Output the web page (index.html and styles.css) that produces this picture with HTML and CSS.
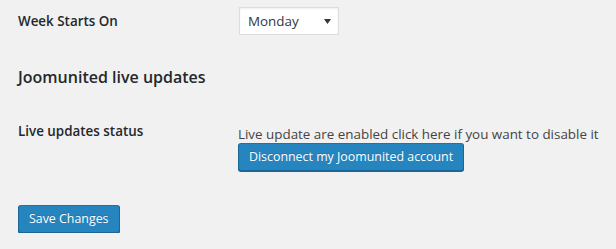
FILE: index.html
```html
<!DOCTYPE html>
<html lang="en">
<head>
    <meta charset="UTF-8">
    <title>Settings</title>
    <link rel="stylesheet" href="styles.css">
</head>
<body>
    <div class="wrap">
        <div class="form-row">
            <div class="row-label">Week Starts On</div>
            <div class="row-field">
                <div class="select-box">
                    <select class="week-select">
                        <option>Sunday</option>
                        <option selected>Monday</option>
                        <option>Saturday</option>
                    </select>
                    <svg class="select-arrow" width="7" height="5" viewBox="0 0 7 5"><path d="M0 0h7L3.5 5z" fill="#32373c"/></svg>
                </div>
            </div>
        </div>

        <h2 class="section-title">Joomunited live updates</h2>

        <div class="form-row status-row">
            <div class="row-label">Live updates status</div>
            <div class="row-field">
                <p class="description">Live update are enabled click here if you want to disable it</p>
                <button class="button-primary">Disconnect my Joomunited account</button>
            </div>
        </div>

        <div class="submit">
            <button class="button-primary">Save Changes</button>
        </div>
    </div>
</body>
</html>
```

FILE: styles.css
```css
body {
    margin: 0;
    background: #f1f1f1;
    font-family: "Open Sans", sans-serif;
    font-size: 13.4px;
    color: #444;
}
.wrap {
    padding: 7px 0 0 18px;
}
.form-row {
    display: grid;
    grid-template-columns: 220px auto;
    align-items: baseline;
}
.row-label {
    font-size: 13.4px;
    line-height: 18px;
    font-weight: 600;
    color: #23282d;
}
.select-box {
    position: relative;
    display: inline-block;
}
.week-select {
    -webkit-appearance: none;
    appearance: none;
    width: 100px;
    height: 28px;
    margin: 0 0 0 1px;
    padding: 2px 8px;
    border: 1px solid #ddd;
    border-radius: 0;
    background: #fff;
    box-shadow: inset 0 1px 2px rgba(0,0,0,0.07);
    font-family: inherit;
    font-size: 13.4px;
    color: #32373c;
}
.select-arrow {
    position: absolute;
    right: 8px;
    top: 12px;
    pointer-events: none;
}
.section-title {
    margin: 31px 0 0;
    font-size: 16px;
    line-height: 22px;
    font-weight: 600;
    color: #23282d;
}
.status-row {
    margin-top: 34px;
    align-items: start;
}
.description {
    margin: 3px 0 0;
    line-height: 18px;
    color: #444;
}
.button-primary {
    height: 28px;
    padding: 0 10px 1px;
    border: 1px solid;
    border-color: #1e74a8 #1a6797 #1a6797;
    border-radius: 3px;
    background: #2684bf;
    box-shadow: 0 1px 0 #1a6797;
    color: #fff;
    font-family: inherit;
    font-size: 12.4px;
    text-shadow: 0 -1px 0 rgba(26,103,151,0.5);
}
.submit {
    margin-top: 34px;
}
```
